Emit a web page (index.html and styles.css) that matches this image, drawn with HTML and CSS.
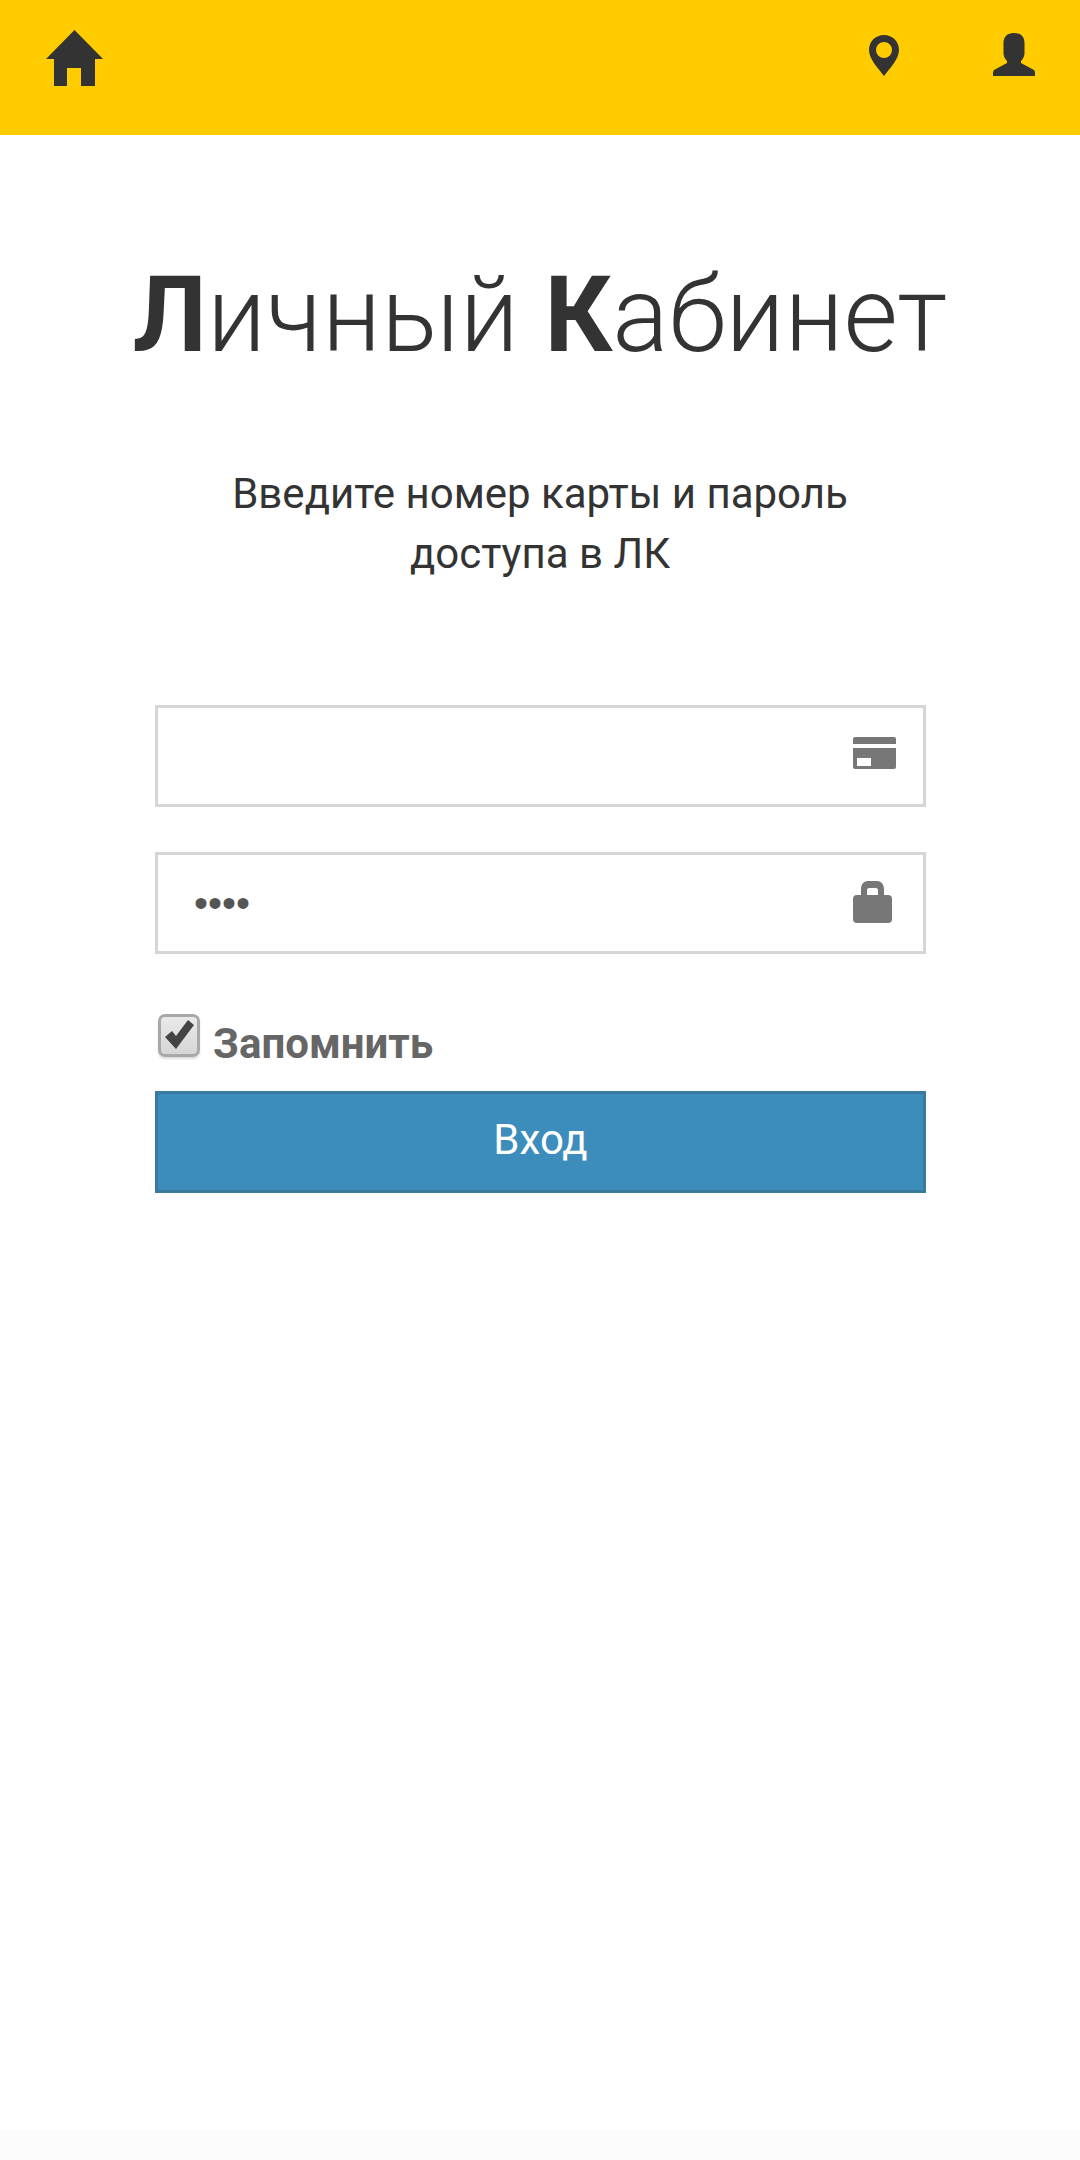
FILE: index.html
```html
<!DOCTYPE html>
<html>

<head lang="ru">
    <meta charset="UTF-8">
    <title>Личный Кабинет</title>
    <link rel="stylesheet" href="styles.css">
</head>

<body>
    <div class="top-bar">
        <a class="top-home" href="javascript:;">
            <svg width="57" height="56" viewBox="0 0 57 56"><path fill="#333" d="M28.500 0 L57 29 L49 29 L49 56 L35 56 L35 38 L21 38 L21 56 L8 56 L8 29 L0 29 Z"/></svg>
        </a>
        <div class="top-right">
            <a class="top-pin" href="javascript:;">
                <svg width="30" height="41" viewBox="0 0 30 41"><path fill="#333" fill-rule="evenodd" d="M15 0 C6.500 0 0 6.500 0 15 C0 24 9 33 15 41 C21 33 30 24 30 15 C30 6.500 23.500 0 15 0 Z M15 7 A8 8 0 1 1 15 23 A8 8 0 1 1 15 7 Z"/></svg>
            </a>
            <a href="javascript:;">
                <svg width="42" height="43" viewBox="0 0 42 43"><path fill="#333" d="M21 0 C28 0 31.500 4 31.500 10 L31.500 20 C31.500 24 29 27 28 28 L28 30 L41 37 L42 39 L42 43 L0 43 L0 39 L1 37 L14 30 L14 28 C13 27 10.500 24 10.500 20 L10.500 10 C10.500 4 14 0 21 0 Z"/></svg>
            </a>
        </div>
    </div>

    <h1 class="page-title"><b>Л</b>ичный <b>К</b>абинет</h1>
    <p class="page-text">Введите номер карты и пароль<br>доступа в ЛК</p>

    <div class="login">
        <div class="login-input">
            <input type="text" class="list-input">
            <svg class="input-icon" width="43" height="32" viewBox="0 0 43 32"><path fill="#777" fill-rule="evenodd" d="M2 0 H41 A2 2 0 0 1 43 2 V7 H0 V2 A2 2 0 0 1 2 0 Z M0 11 H43 V30 A2 2 0 0 1 41 32 H2 A2 2 0 0 1 0 30 Z M4 21 V29 H18 V21 Z"/></svg>
        </div>
        <div class="login-input">
            <input type="password" class="list-input" value="1234">
            <svg class="input-icon icon-lock" width="39" height="42" viewBox="0 0 39 42"><path fill="#777" fill-rule="evenodd" d="M8 14 V8 C8 3 11 0 15 0 H24 C28 0 31 3 31 8 V14 H35 A4 4 0 0 1 39 18 V38 A4 4 0 0 1 35 42 H4 A4 4 0 0 1 0 38 V18 A4 4 0 0 1 4 14 Z M14 14 H25 V9 C25 8 24 7 23 7 H16 C15 7 14 8 14 9 Z"/></svg>
        </div>

        <label class="remember">
            <span class="check-box">
                <input type="checkbox" checked>
                <svg class="check-mark" width="29" height="29" viewBox="0 0 29 29"><path fill="#444" d="M0 17 L7 11 L11 16 L23 0 L29 5 L11 29 Z"/></svg>
            </span>
            <span class="remember-text">Запомнить</span>
        </label>
        <a class="login-button" href="javascript:;">Вход</a>
    </div>

    <div class="page-bottom"></div>
</body>

</html>
```
FILE: styles.css
```css
body {
    margin: 0;
    height: 2160px;
    display: flex;
    flex-direction: column;
    background: #ffffff;
    font-family: Roboto, "Liberation Sans", sans-serif;
    color: #333333;
}

a {
    text-decoration: none;
    display: block;
}

.top-bar {
    height: 135px;
    flex-shrink: 0;
    background: #ffcc00;
    display: flex;
    justify-content: space-between;
    align-items: flex-start;
    padding: 30px 45px 0 46px;
    box-sizing: border-box;
}

.top-right {
    display: flex;
    gap: 94px;
    padding-top: 3px;
}

.top-pin {
    padding-top: 2px;
}

.page-title {
    margin: 116px 0 0 0;
    font-size: 105px;
    line-height: 130px;
    font-weight: 300;
    text-align: center;
    white-space: nowrap;
}

.page-title b {
    font-weight: 700;
}

.page-text {
    margin: 83px 0 0 0;
    font-size: 42px;
    line-height: 60px;
    text-align: center;
}

.login {
    width: 771px;
    margin: 0 0 0 155px;
    padding-top: 121px;
}

.login-input {
    height: 102px;
    margin-bottom: 45px;
    position: relative;
}

.list-input {
    width: 100%;
    height: 100%;
    box-sizing: border-box;
    border: 3px solid #d5d5d8;
    padding: 0 36px;
    font-size: 40px;
    color: #555555;
    outline: none;
}

.input-icon {
    position: absolute;
    right: 30px;
    top: 32px;
}

.icon-lock {
    right: 34px;
    top: 29px;
}

.remember {
    display: flex;
    align-items: flex-start;
    margin-top: 60px;
    height: 77px;
    font-size: 42px;
    font-weight: 700;
    color: #666666;
}

.check-box {
    position: relative;
    width: 42px;
    height: 43px;
    margin: 0 13px 0 3px;
}

.check-box input {
    appearance: none;
    display: block;
    width: 100%;
    height: 100%;
    margin: 0;
    box-sizing: border-box;
    border: 3px solid #a8a8a8;
    border-radius: 7px;
    background: linear-gradient(#e9e9e9, #d6d6d6);
    box-shadow: 0 2px 2px #dddddd;
}

.check-mark {
    position: absolute;
    left: 7px;
    top: 6px;
}

.remember-text {
    padding-top: 5px;
}

.login-button {
    height: 102px;
    box-sizing: border-box;
    background: #3d8dbc;
    border: 3px solid #3a7a9f;
    color: #ffffff;
    font-size: 42px;
    line-height: 92px;
    text-align: center;
}

.page-bottom {
    margin-top: auto;
    height: 30px;
    background: #fcfcfc;
}
```
